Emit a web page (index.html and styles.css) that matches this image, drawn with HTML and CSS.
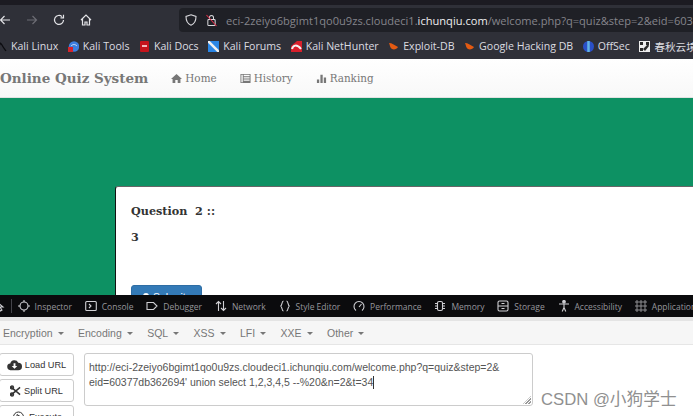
FILE: index.html
```html
<!DOCTYPE html>
<html lang="en">
<head>
<meta charset="utf-8">
<title>Online Quiz System</title>
<link rel="stylesheet" href="styles.css">
</head>
<body>
<div class="tabstrip"></div>
<div class="toolbar">
  <svg class="tb-icon back" viewBox="0 0 12 12"><path d="M11 6H1.500M5.500 2 1.500 6l4 4"/></svg>
  <svg class="tb-icon fwd" viewBox="0 0 12 12"><path d="M1 6h9.500M6.500 2l4 4-4 4"/></svg>
  <svg class="tb-icon reload" viewBox="0 0 12 12"><path d="M10.500 6A4.500 4.500 0 1 1 9 2.600M10.500 .8v3H7.500"/></svg>
  <svg class="tb-icon home" viewBox="0 0 12 12"><path d="M1 6 6 1l5 5M2.500 5v6h2.500V8h2v3h2.500V5"/></svg>
  <div class="urlbar">
    <svg class="shield" viewBox="0 0 12 12"><path d="M6 .8 11 2.500C11 7 9 10 6 11.200 3 10 1 7 1 2.500Z"/></svg>
    <svg class="lock" viewBox="0 0 12 14"><rect x="2" y="6" width="8" height="6.500" rx="1"/><path d="M3.800 6V3.800a2.200 2.200 0 0 1 4.400 0V6"/><path class="slash" d="M.5 1 11.500 13"/></svg>
    <span class="url">eci-2zeiyo6bgimt1qo0u9zs.cloudeci1.<b>ichunqiu.com</b>/welcome.php?q=quiz&amp;step=2&amp;eid=60377db362694</span>
  </div>
</div>
<div class="bookmarks">
  <span class="bm bm-first"><svg class="ico" viewBox="0 0 11 11"><path class="k-line" d="M0 2c3-1 5 0 6 2 1 2 2 3 4 6M4 3 2 7"/></svg>Kali Linux</span>
  <span class="bm"><svg class="ico" viewBox="0 0 11 11"><circle cx="6" cy="5.500" r="5.200" fill="#3d7fe0"/><path d="M3 5c2-2 4-2 6 0" fill="none" stroke="#cfe0fa"/><rect x="0" y="6" width="5" height="5" fill="#d5242c"/></svg>Kali Tools</span>
  <span class="bm"><svg class="ico" viewBox="0 0 11 11"><rect x="1" y="0" width="9" height="11" rx="1" fill="#c5141c"/><rect x="3" y="4" width="5" height="2" fill="#f3b9bb"/></svg>Kali Docs</span>
  <span class="bm"><svg class="ico" viewBox="0 0 11 11"><rect width="11" height="11" fill="#2a86e6"/><path d="M0 0 11 11" stroke="#f0f0f0" stroke-width="2.500"/></svg>Kali Forums</span>
  <span class="bm"><svg class="ico" viewBox="0 0 11 11"><path d="M0 5 6 0h5v11H0Z" fill="#d8202c"/><path d="M1 8c1-4 5-5 9 0" fill="none" stroke="#f2f2f2" stroke-width="2"/></svg>Kali NetHunter</span>
  <span class="bm"><svg class="ico" viewBox="0 0 11 11"><path d="M1 2c3 0 5 2 9 4-1 2-4 3-6 2C2 7 2 4 1 2Z" fill="#e35a12"/></svg>Exploit-DB</span>
  <span class="bm"><svg class="ico" viewBox="0 0 11 11"><path d="M1 2c3 0 5 2 9 4-1 2-4 3-6 2C2 7 2 4 1 2Z" fill="#e35a12"/></svg>Google Hacking DB</span>
  <span class="bm"><svg class="ico" viewBox="0 0 11 11"><circle cx="5.500" cy="5.500" r="5.500" fill="#2a50c8"/><path d="M5.500 0v11" stroke="#62b4e6" stroke-width="2.500"/></svg>OffSec</span>
  <span class="bm"><svg class="ico" viewBox="0 0 11 11"><rect width="11" height="11" fill="#eee"/><path d="M1 1h3v3H1ZM7 1h3v3H7ZM1 7h3v3H1ZM4 8l5-5 1 2-4 5Z" fill="#2a2a2a"/></svg>春秋云境</span>
</div>
<nav class="site-nav">
  <span class="brand">Online Quiz System</span>
  <span class="nav-item"><svg viewBox="0 0 12 12"><path d="M6 1 0 6.500h1.700V11h3V7.500h2.600V11h3V6.500H12Z"/></svg>Home</span>
  <span class="nav-item"><svg viewBox="0 0 12 12"><path fill-rule="evenodd" d="M.5 1h11v10H.5ZM1.500 2v8h1.500V2ZM4 2v1.500h6.500V2ZM4 4.500V6h6.500V4.500ZM4 7v1.500h6.500V7Z"/></svg>History</span>
  <span class="nav-item"><svg viewBox="0 0 12 12"><path d="M1 7h2.500v4H1ZM4.800 2h2.500v9H4.800ZM8.500 5H11v6H8.500Z"/></svg>Ranking</span>
</nav>
<main class="stage">
  <section class="card">
    <p class="q-title">Question &nbsp;2 ::</p>
    <p class="q-body">3</p>
    <button class="submit"><i class="sub-ico"></i>Submit</button>
  </section>
</main>
<div class="devtools">
  <span class="dt dt-pick"><svg viewBox="0 0 12 12"><path d="M2 1v9l2.500-2 2 3 1.500-1-2-3h3Z"/></svg></span>
  <span class="dt-sep"></span>
  <span class="dt"><svg viewBox="0 0 12 12"><circle cx="6" cy="6" r="4"/><path d="M6 0v2M6 10v2M0 6h2M10 6h2"/></svg>Inspector</span>
  <span class="dt"><svg viewBox="0 0 12 12"><rect x=".7" y="1.500" width="10.600" height="9" rx="1"/><path d="m4 4 2 2-2 2"/></svg>Console</span>
  <span class="dt"><svg viewBox="0 0 12 12"><path d="M1 2.500h6.500L11 6 7.500 9.500H1Z"/></svg>Debugger</span>
  <span class="dt"><svg viewBox="0 0 12 12"><path d="M3.500 11V1.500M1 4l2.500-2.500L6 4M8.500 1v9.500M6 8l2.500 2.500L11 8"/></svg>Network</span>
  <span class="dt"><svg viewBox="0 0 12 12"><path d="M4.500 1C2.500 1 3.500 5.500 1.500 6c2 .5 1 5 3 5M7.500 1c2 0 1 4.500 3 5-2 .5-1 5-3 5"/></svg>Style Editor</span>
  <span class="dt"><svg viewBox="0 0 12 12"><path d="M3 10.500a5 5 0 1 1 6 0M6 7l2.500-3"/></svg>Performance</span>
  <span class="dt"><svg viewBox="0 0 12 12"><rect x="3.500" y="1.500" width="5" height="9" rx="1.500"/><path d="M1 3.500h2M1 6h2M1 8.500h2M9 3.500h2M9 6h2M9 8.500h2"/></svg>Memory</span>
  <span class="dt"><svg viewBox="0 0 12 12"><rect x="1" y="1" width="10" height="10" rx="1.500"/><path d="M1 6h10M4.500 3.500h3M4.500 8.500h3"/></svg>Storage</span>
  <span class="dt"><svg viewBox="0 0 12 12"><circle class="solid" cx="6" cy="1.800" r="1.300"/><path d="M1 4h10M6 4v3.500M6 7.500 4.200 11.500M6 7.500l1.800 4"/></svg>Accessibility</span>
  <span class="dt dt-grid"><svg viewBox="0 0 12 12"><circle cx="2" cy="2" r="1.200"/><circle cx="6" cy="2" r="1.200"/><circle cx="10" cy="2" r="1.200"/><circle cx="2" cy="6" r="1.200"/><circle cx="6" cy="6" r="1.200"/><circle cx="10" cy="6" r="1.200"/><circle cx="2" cy="10" r="1.200"/><circle cx="6" cy="10" r="1.200"/><circle cx="10" cy="10" r="1.200"/></svg>Application</span>
</div>
<div class="dt-gap"></div>
<div class="hb-menu">
  <span class="hb-item">Encryption</span>
  <span class="hb-item">Encoding</span>
  <span class="hb-item">SQL</span>
  <span class="hb-item">XSS</span>
  <span class="hb-item">LFI</span>
  <span class="hb-item">XXE</span>
  <span class="hb-item">Other</span>
</div>
<div class="hb-main">
  <div class="hb-buttons">
    <span class="hb-btn"><svg class="b-ico" viewBox="0 0 16 12"><path fill-rule="evenodd" d="M4 11.500a3.500 3.500 0 0 1-.5-7A4.500 4.500 0 0 1 12 3.500a4 4 0 0 1 0 8ZM7 4v3H5l3 3 3-3H9V4Z"/></svg>Load URL</span>
    <span class="hb-btn"><svg class="b-ico b-cut" viewBox="0 0 12 12"><path d="M1 1.500 11 10M1 10.500 11 2"/><circle cx="2.200" cy="2.200" r="1.600"/><circle cx="2.200" cy="9.800" r="1.600"/></svg>Split URL</span>
    <span class="hb-btn"><svg class="b-ico b-run" viewBox="0 0 12 12"><circle cx="6" cy="6" r="5"/><path d="M4.500 3.500 8.500 6l-4 2.500Z"/></svg>Execute</span>
  </div>
  <div class="hb-url">
    <span>http://eci-2zeiyo6bgimt1qo0u9zs.cloudeci1.ichunqiu.com/welcome.php?q=quiz&amp;step=2&amp;</span>
    <span>eid=60377db362694' union select 1,2,3,4,5 --%20&amp;n=2&amp;t=34<i class="caret"></i></span>
  </div>
  <span class="watermark">CSDN @小狗学士</span>
</div>
</body>
</html>
```
FILE: styles.css
```css
* { box-sizing: border-box; }
html, body { margin: 0; height: 416px; width: 693px; overflow: hidden; }
body { display: flex; flex-direction: column; background: #fff; font-family: "Liberation Sans", sans-serif; position: relative; }
p { margin: 0; }

.tabstrip { height: 5px; flex: none; background: #1c1b22; }
.toolbar { height: 27px; flex: none; background: #2f3038; display: flex; align-items: center; }
.tb-icon { width: 12px; height: 12px; flex: none; margin-top: 3px; fill: none; stroke: #e4e4e8; stroke-width: 1.200; }
.back { margin-left: -1px; }
.fwd { margin-left: 15px; stroke: #6c6c74; }
.reload { margin-left: 15px; }
.home { margin-left: 15px; }
.urlbar { margin-left: 87px; flex: 1; min-width: 0; height: 24px; margin-top: 3px; background: #1f2026; border-radius: 4px 0 0 4px; display: flex; align-items: center; padding-left: 6px; overflow: hidden; }
.shield { width: 12px; height: 12px; flex: none; fill: none; stroke: #d8d8dc; stroke-width: 1.100; }
.lock { width: 11px; height: 13px; flex: none; margin-left: 9px; fill: none; stroke: #d8d8dc; stroke-width: 1.100; }
.lock .slash { stroke: #e0304a; }
.url { margin-left: 9px; font: 11.100px "Open Sans", sans-serif; color: #85858c; white-space: nowrap; }
.url b { font-weight: 400; color: #eeeef0; }

.bookmarks { height: 27px; flex: none; background: #2f3038; padding-top: 1px; display: flex; align-items: center; gap: 9.500px; font: 10.600px "Open Sans", "Noto Sans CJK SC", sans-serif; color: #dcdce0; white-space: nowrap; overflow: hidden; }
.bm { display: flex; align-items: center; gap: 4px; flex: none; }
.bm-first { margin-left: -4px; }
.ico { width: 11px; height: 11px; flex: none; display: block; }
.k-line { fill: none; stroke: #0c0c10; stroke-width: 1.300; }

.site-nav { height: 39px; flex: none; background: linear-gradient(#fff, #f8f8f8); border-bottom: 1px solid #e2e2e2; display: flex; align-items: center; font-family: "DejaVu Serif", serif; color: #777; white-space: nowrap; }
.brand { font-size: 13.500px; font-weight: 700; color: #777; margin-right: 23px; }
.nav-item { display: flex; align-items: center; gap: 3px; font-size: 10.400px; margin-right: 23px; }
.nav-item svg { width: 11px; height: 11px; fill: #777; }

.stage { flex: 1; min-height: 0; background: #0d9163; padding: 88px 0 0 115px; overflow: hidden; }
.card { background: #fff; border-top: 1px solid #666; border-left: 1px solid #111; border-radius: 3px 0 0 0; height: 200px; padding: 17px 0 0 15px; font-family: "DejaVu Serif", serif; font-weight: 700; font-size: 11.200px; color: #333; }
.q-body { margin-top: 12px; font-size: 11.200px; }
.submit { display: flex; align-items: center; gap: 4px; margin-top: 41px; width: 71px; height: 24px; background: #337ab7; border: 1px solid #2e6da4; border-radius: 3px; color: #fff; font: 10.500px "Liberation Sans", sans-serif; padding: 0 0 0 11px; }
.sub-ico { width: 6px; height: 8px; background: #fff; border-radius: 3px 3px 1px 1px; }

.devtools { height: 22px; flex: none; background: #0b0b0d; display: flex; align-items: center; gap: 12.800px; font: 8.500px "Open Sans", sans-serif; color: #96969c; white-space: nowrap; overflow: hidden; }
.dt { display: flex; align-items: center; gap: 5px; flex: none; }
.dt svg { width: 12px; height: 12px; flex: none; fill: none; stroke: #d0d0d4; stroke-width: 1.100; }
.dt .solid { fill: #d0d0d4; }
.dt-grid svg { stroke-width: .7; }
.dt-pick { margin-left: -6px; }
.dt-sep { width: 1px; height: 14px; background: #44444a; flex: none; margin-left: -8px; margin-right: -7px; }
.dt-gap { height: 4px; flex: none; background: #e4e4e4; }

.hb-menu { height: 24px; flex: none; background: #f6f6f6; border-bottom: 1px solid #e6e6e6; padding-top: 1px; display: flex; align-items: center; gap: 14.400px; padding-left: 3px; font-size: 10.500px; color: #777; }
.hb-item::after { content: ""; display: inline-block; margin-left: 5px; vertical-align: 2px; border: 3px solid transparent; border-top-color: #777; border-bottom: 0; }

.hb-main { height: 71px; flex: none; display: flex; align-items: flex-start; padding-top: 8px; position: relative; overflow: hidden; }
.hb-buttons { display: flex; flex-direction: column; gap: 3px; margin-left: -1px; width: 75px; flex: none; }
.hb-btn { height: 23px; display: flex; align-items: center; justify-content: center; gap: 3px; background: #fff; border: 1px solid #ccc; border-radius: 3px; font-size: 9.200px; color: #333; }
.b-ico { width: 15px; height: 12px; flex: none; fill: #333; }
.b-cut { fill: none; stroke: #333; stroke-width: 1.600; width: 11px; }
.b-run { fill: none; stroke: #333; stroke-width: 1; }
.hb-url { margin-left: 10px; width: 449px; height: 53px; border: 1px solid #ccc; border-radius: 3px; padding: 6px 4px; display: flex; flex-direction: column; gap: 1px; font-size: 10.500px; line-height: 14px; color: #555; white-space: nowrap; position: relative; }
.hb-url::after { content: ""; position: absolute; right: 1px; bottom: 1px; width: 8px; height: 8px; background: repeating-linear-gradient(135deg, transparent 0 1px, #999 1px 2px); clip-path: polygon(100% 0, 100% 100%, 0 100%); }
.caret { display: inline-block; width: 1px; height: 13px; background: #333; vertical-align: -3px; }
.watermark { position: absolute; left: 541px; top: 41px; font: 16.700px "Liberation Sans", "Noto Sans CJK SC", sans-serif; color: #909090; white-space: nowrap; }
```
